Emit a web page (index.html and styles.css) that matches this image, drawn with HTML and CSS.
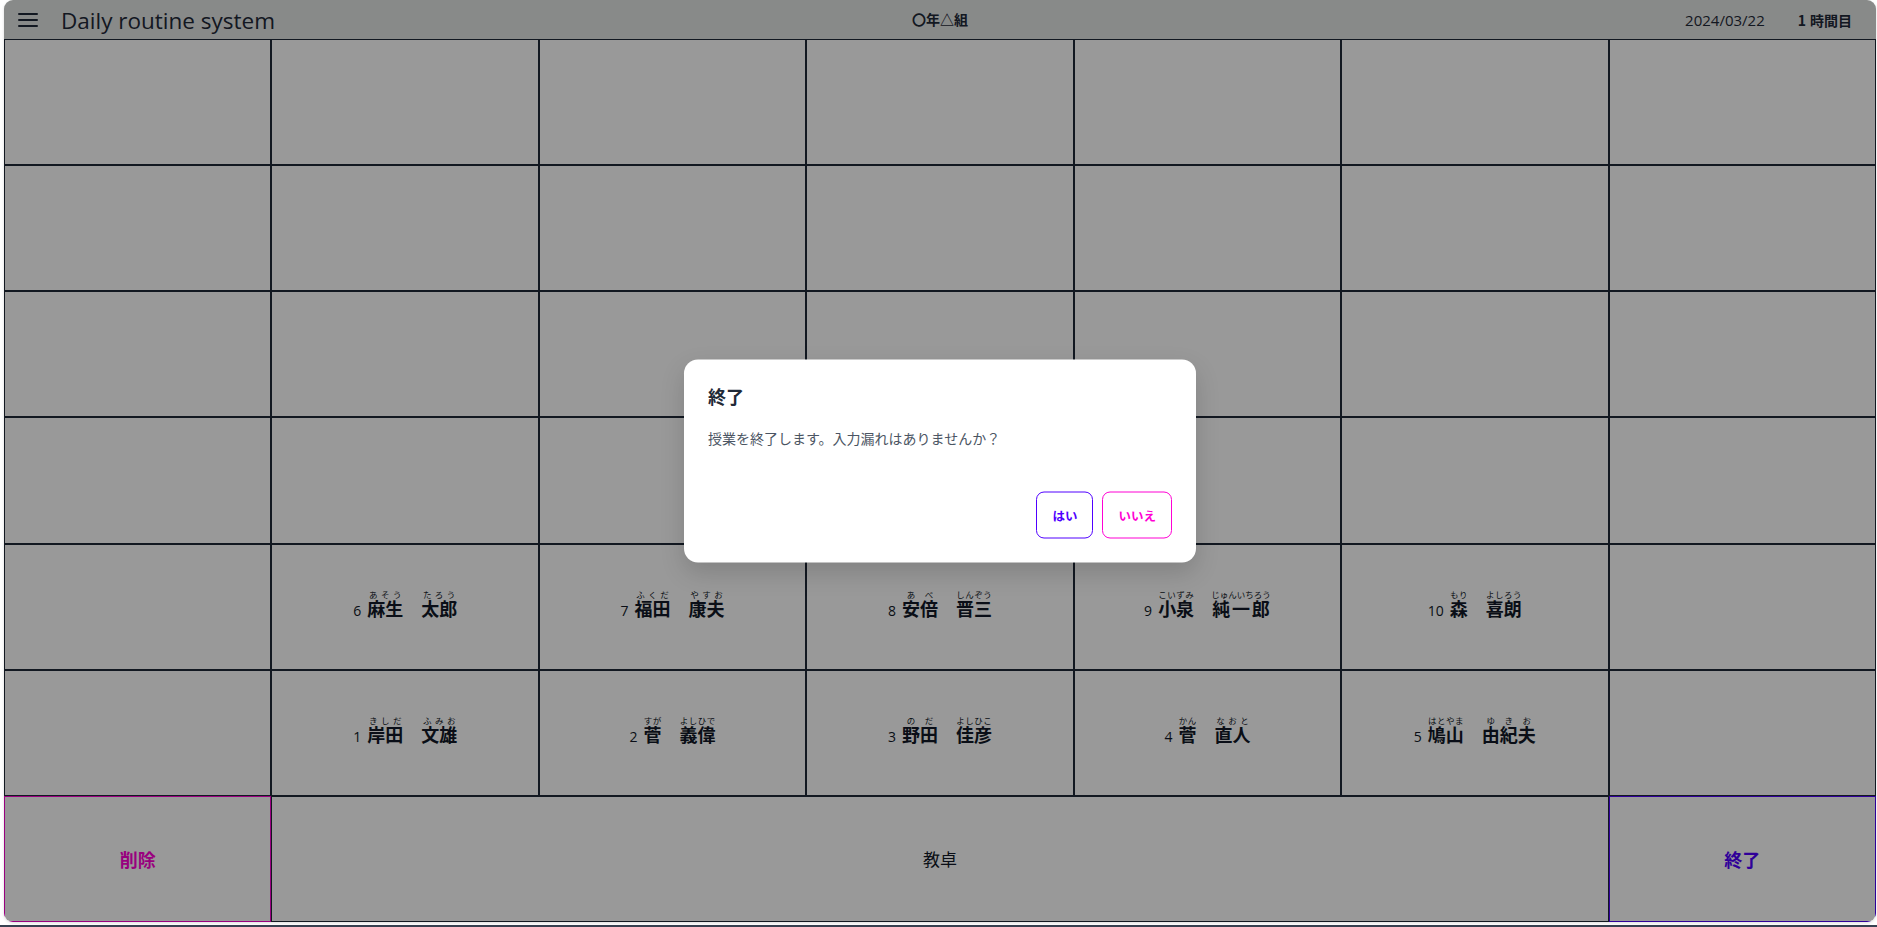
FILE: index.html
```html
<!DOCTYPE html>
<html lang="ja">
<head>
<meta charset="utf-8">
<title>Daily routine system</title>
<link rel="stylesheet" href="styles.css">
</head>
<body>
<div class="app">
  <header class="topbar">
    <div class="topbar-left">
      <svg class="menu-icon" width="20" height="16" viewBox="0 0 20 16" aria-hidden="true">
        <path d="M1 2h18M1 8h18M1 14h18" stroke="#1f2937" stroke-width="2" stroke-linecap="round" fill="none"/>
      </svg>
      <h1 class="app-title">Daily routine system</h1>
    </div>
    <div class="class-name">〇年△組</div>
    <div class="topbar-right">
      <span class="date">2024/03/22</span>
      <span class="period"><span class="period-num">1</span>時間目</span>
    </div>
  </header>

  <main class="seat-grid">
    <div class="cell"></div><div class="cell"></div><div class="cell"></div><div class="cell"></div><div class="cell"></div><div class="cell"></div><div class="cell"></div>
    <div class="cell"></div><div class="cell"></div><div class="cell"></div><div class="cell"></div><div class="cell"></div><div class="cell"></div><div class="cell"></div>
    <div class="cell"></div><div class="cell"></div><div class="cell"></div><div class="cell"></div><div class="cell"></div><div class="cell"></div><div class="cell"></div>
    <div class="cell"></div><div class="cell"></div><div class="cell"></div><div class="cell"></div><div class="cell"></div><div class="cell"></div><div class="cell"></div>

    <div class="cell"></div>
    <div class="cell student"><span class="num">6</span><span class="name"><ruby>麻生<rt>あそう</rt></ruby>　<ruby>太郎<rt>たろう</rt></ruby></span></div>
    <div class="cell student"><span class="num">7</span><span class="name"><ruby>福田<rt>ふくだ</rt></ruby>　<ruby>康夫<rt>やすお</rt></ruby></span></div>
    <div class="cell student"><span class="num">8</span><span class="name"><ruby>安倍<rt>あべ</rt></ruby>　<ruby>晋三<rt>しんぞう</rt></ruby></span></div>
    <div class="cell student"><span class="num">9</span><span class="name"><ruby>小泉<rt>こいずみ</rt></ruby>　<ruby>純一郎<rt>じゅんいちろう</rt></ruby></span></div>
    <div class="cell student"><span class="num">10</span><span class="name"><ruby>森<rt>もり</rt></ruby>　<ruby>喜朗<rt>よしろう</rt></ruby></span></div>
    <div class="cell"></div>

    <div class="cell"></div>
    <div class="cell student"><span class="num">1</span><span class="name"><ruby>岸田<rt>きしだ</rt></ruby>　<ruby>文雄<rt>ふみお</rt></ruby></span></div>
    <div class="cell student"><span class="num">2</span><span class="name"><ruby>菅<rt>すが</rt></ruby>　<ruby>義偉<rt>よしひで</rt></ruby></span></div>
    <div class="cell student"><span class="num">3</span><span class="name"><ruby>野田<rt>のだ</rt></ruby>　<ruby>佳彦<rt>よしひこ</rt></ruby></span></div>
    <div class="cell student"><span class="num">4</span><span class="name"><ruby>菅<rt>かん</rt></ruby>　<ruby>直人<rt>なおと</rt></ruby></span></div>
    <div class="cell student"><span class="num">5</span><span class="name"><ruby>鳩山<rt>はとやま</rt></ruby>　<ruby>由紀夫<rt>ゆきお</rt></ruby></span></div>
    <div class="cell"></div>

    <div class="cell action delete">削除</div>
    <div class="cell desk">教卓</div>
    <div class="cell action finish">終了</div>
  </main>

  <div class="backdrop"></div>
  <div class="dialog" role="dialog">
    <h2 class="dialog-title">終了</h2>
    <p class="dialog-text">授業を終了します。入力漏れはありませんか？</p>
    <div class="dialog-actions">
      <button class="btn btn-yes">はい</button>
      <button class="btn btn-no">いいえ</button>
    </div>
  </div>
</div>
<div class="page-bottom"></div>
</body>
</html>
```

FILE: styles.css
```css
* { box-sizing: border-box; }

html, body {
  margin: 0;
  padding: 0;
  height: 100%;
  overflow: hidden;
  background: #ffffff;
}

body {
  font-family: "Open Sans", "Noto Sans CJK JP", sans-serif;
  color: #111827;
}

.app {
  position: relative;
  margin: 0 1px 0 4px;
  height: 922px;
  border-radius: 9px;
  overflow: hidden;
  display: flex;
  flex-direction: column;
  box-shadow: 0 1px 3px rgba(0, 0, 0, 0.15);
}

.topbar {
  height: 39px;
  flex: 0 0 39px;
  background: #e3e6e5;
  display: grid;
  grid-template-columns: 1fr auto 1fr;
  align-items: center;
  padding: 0 14px;
  color: #1f2937;
}

.topbar-left {
  display: flex;
  align-items: center;
  gap: 23px;
}

.menu-icon {
  display: block;
  margin-top: 1px;
}

.app-title {
  margin: 0;
  font-size: 22.5px;
  font-weight: 400;
  line-height: 30px;
  color: #1f2937;
  margin-top: 2px;
}

.class-name {
  font-family: "Noto Sans CJK JP", sans-serif;
  font-size: 14px;
  font-weight: 700;
  line-height: 20px;
  margin-top: -2px;
}

.topbar-right {
  display: flex;
  justify-content: flex-end;
  align-items: center;
  gap: 33px;
  margin-right: 10px;
}

.date {
  font-size: 15px;
  font-weight: 400;
}

.period {
  font-family: "Noto Sans CJK JP", sans-serif;
  font-size: 14px;
  font-weight: 700;
}

.period-num {
  margin-right: 4px;
}

.seat-grid {
  flex: 1 1 auto;
  display: grid;
  grid-template-columns: repeat(7, 1fr);
  grid-template-rows: repeat(7, 1fr);
  background: #ffffff;
}

.cell {
  border: 1px solid #1f2937;
  background: #ffffff;
  display: flex;
  align-items: center;
  justify-content: center;
  min-width: 0;
  min-height: 0;
}

.student {
  gap: 6px;
  align-items: baseline;
  align-content: center;
  flex-wrap: wrap;
  padding: 0 0 4px 0;
}

.num {
  font-size: 14px;
  color: #111827;
}

.name {
  font-family: "Noto Sans CJK JP", sans-serif;
  font-size: 18px;
  font-weight: 700;
  color: #111827;
  line-height: 24px;
}

.name rt {
  font-size: 8.5px;
  font-weight: 400;
  line-height: 1;
}

.action {
  font-family: "Noto Sans CJK JP", sans-serif;
  font-size: 18px;
  font-weight: 700;
}

.delete {
  border-color: #ff00d4;
  color: #ff00d4;
}

.finish {
  border-color: #5000ff;
  color: #5000ff;
}

.desk {
  grid-column: span 5;
  font-family: "Noto Sans CJK JP", sans-serif;
  font-size: 17px;
  font-weight: 400;
  color: #111827;
}

.backdrop {
  position: absolute;
  inset: 0;
  background: rgba(0, 0, 0, 0.4);
}

.dialog {
  position: absolute;
  left: 50%;
  top: 50%;
  width: 512px;
  transform: translate(-50%, -50%);
  background: #ffffff;
  border-radius: 14px;
  padding: 22px 24px 24px;
  box-shadow: 0 10px 25px rgba(0, 0, 0, 0.15);
  font-family: "Noto Sans CJK JP", sans-serif;
}

.dialog-title {
  margin: 0;
  font-size: 18px;
  line-height: 28px;
  font-weight: 700;
  color: #1f2937;
}

.dialog-text {
  margin: 16px 0 0;
  font-size: 14px;
  line-height: 24px;
  color: #4b5563;
}

.dialog-actions {
  margin-top: 42px;
  display: flex;
  justify-content: flex-end;
  gap: 9px;
}

.btn {
  height: 47px;
  padding: 0 15px;
  border-radius: 8px;
  background: #ffffff;
  font-family: "Noto Sans CJK JP", sans-serif;
  font-size: 12.5px;
  font-weight: 700;
  cursor: pointer;
}

.btn-yes {
  border: 1px solid #5000ff;
  color: #5000ff;
}

.btn-no {
  border: 1px solid #ff00d4;
  color: #ff00d4;
}

.page-bottom {
  margin-top: 3px;
  height: 10px;
  background: #374151;
}
```
